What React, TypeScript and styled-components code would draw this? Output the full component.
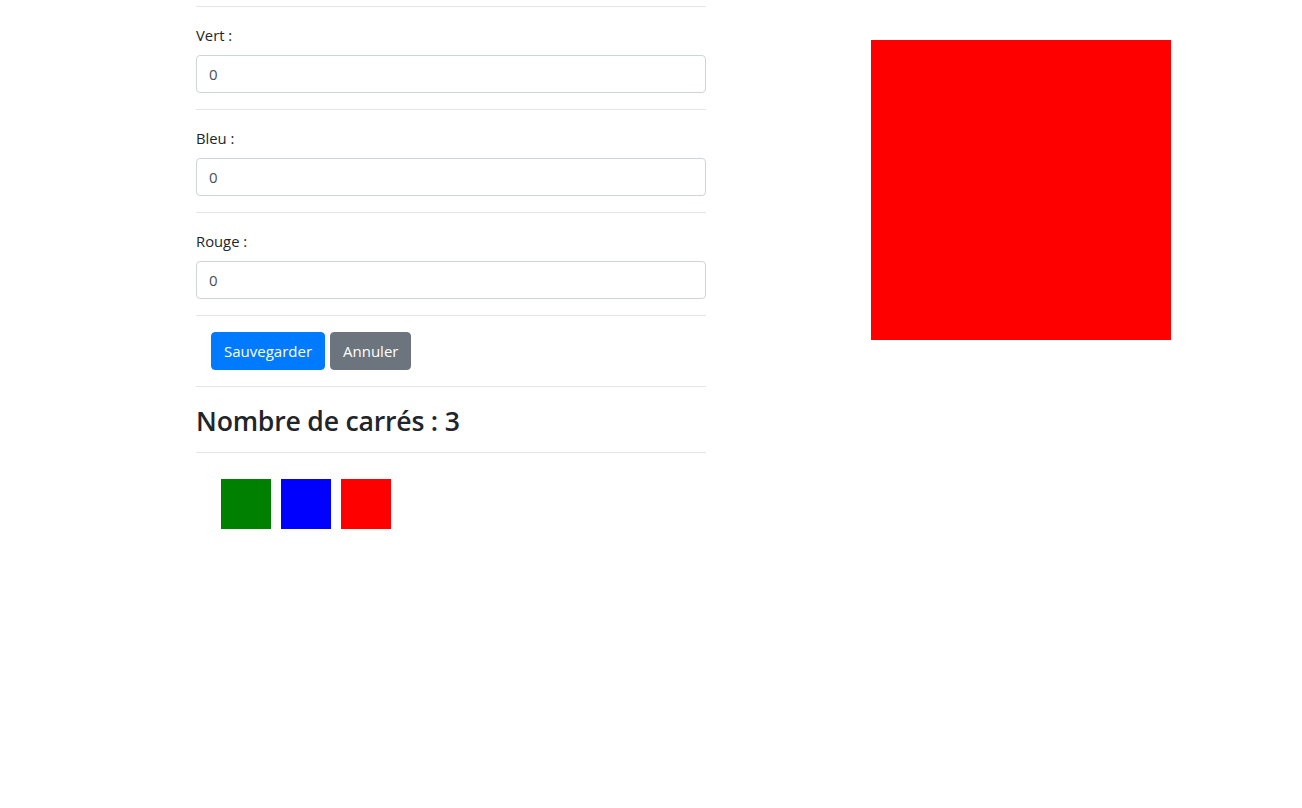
import React from "react";
import styled, { createGlobalStyle } from "styled-components";

const Global = createGlobalStyle`
  html, body { margin: 0; padding: 0; background: #fff; }
  body {
    font-family: "Open Sans", "Noto Sans", "Liberation Sans", sans-serif;
    font-size: 15px;
    line-height: 24px;
    color: #212529;
  }
  * { box-sizing: border-box; }
`;

const Page = styled.div`
  display: flex;
  align-items: flex-start;
  width: 1302px;
  height: 808px;
  overflow: hidden;
`;

const LeftCol = styled.div`
  width: 510px;
  margin-left: 196px;
  padding-top: 6px;
  display: flex;
  flex-direction: column;
`;

const RightCol = styled.div`
  margin-left: 165px;
  padding-top: 40px;
`;

const Rule = styled.hr`
  margin: 0;
  border: 0;
  border-top: 1px solid rgba(0, 0, 0, 0.1);
  height: 0;
`;

const Section = styled.div`
  padding: 16px 0;
`;

const Label = styled.label`
  display: block;
  height: 24px;
  line-height: 25px;
  font-size: 14.8px;
  margin-bottom: 8px;
  color: #212529;
`;

const Input = styled.input`
  display: block;
  width: 100%;
  height: 38px;
  padding: 6px 12px;
  font-family: inherit;
  font-size: 15px;
  color: #495057;
  background: #fff;
  border: 1px solid #ced4da;
  border-radius: 4px;
  outline: none;
`;

const ButtonRow = styled.div`
  display: flex;
  gap: 5px;
  padding-left: 15px;
`;

const Button = styled.button<{ $variant: "primary" | "secondary" }>`
  height: 38px;
  padding: 0 12px;
  font-family: inherit;
  font-size: 15px;
  color: #fff;
  border: 1px solid ${(p) => (p.$variant === "primary" ? "#007bff" : "#6c757d")};
  background: ${(p) => (p.$variant === "primary" ? "#007bff" : "#6c757d")};
  border-radius: 4px;
  cursor: pointer;
`;

const Heading = styled.h3`
  margin: 0;
  font-size: 26.6px;
  font-weight: 600;
  line-height: 36px;
  height: 34px;
  color: #212529;
  letter-spacing: -0.2px;
`;

const HeadingSection = styled.div`
  padding: 16px 0 15px;
`;

const Squares = styled.div`
  display: flex;
  gap: 10px;
  padding: 26px 0 0 25px;
`;

const Square = styled.div<{ $color: string; $size: number }>`
  width: ${(p) => p.$size}px;
  height: ${(p) => p.$size}px;
  background: ${(p) => p.$color};
`;

const fields = ["Vert", "Bleu", "Rouge"];

export default function App() {
  return (
    <>
      <Global />
      <Page>
        <LeftCol>
          <Rule />
          {fields.map((f) => (
            <React.Fragment key={f}>
              <Section>
                <Label>{f} :</Label>
                <Input defaultValue="0" />
              </Section>
              <Rule />
            </React.Fragment>
          ))}
          <Section>
            <ButtonRow>
              <Button $variant="primary">Sauvegarder</Button>
              <Button $variant="secondary">Annuler</Button>
            </ButtonRow>
          </Section>
          <Rule />
          <HeadingSection>
            <Heading>Nombre de carrés : 3</Heading>
          </HeadingSection>
          <Rule />
          <Squares>
            <Square $color="#008000" $size={50} />
            <Square $color="#0000ff" $size={50} />
            <Square $color="#ff0000" $size={50} />
          </Squares>
        </LeftCol>
        <RightCol>
          <Square $color="#ff0000" $size={300} />
        </RightCol>
      </Page>
    </>
  );
}
